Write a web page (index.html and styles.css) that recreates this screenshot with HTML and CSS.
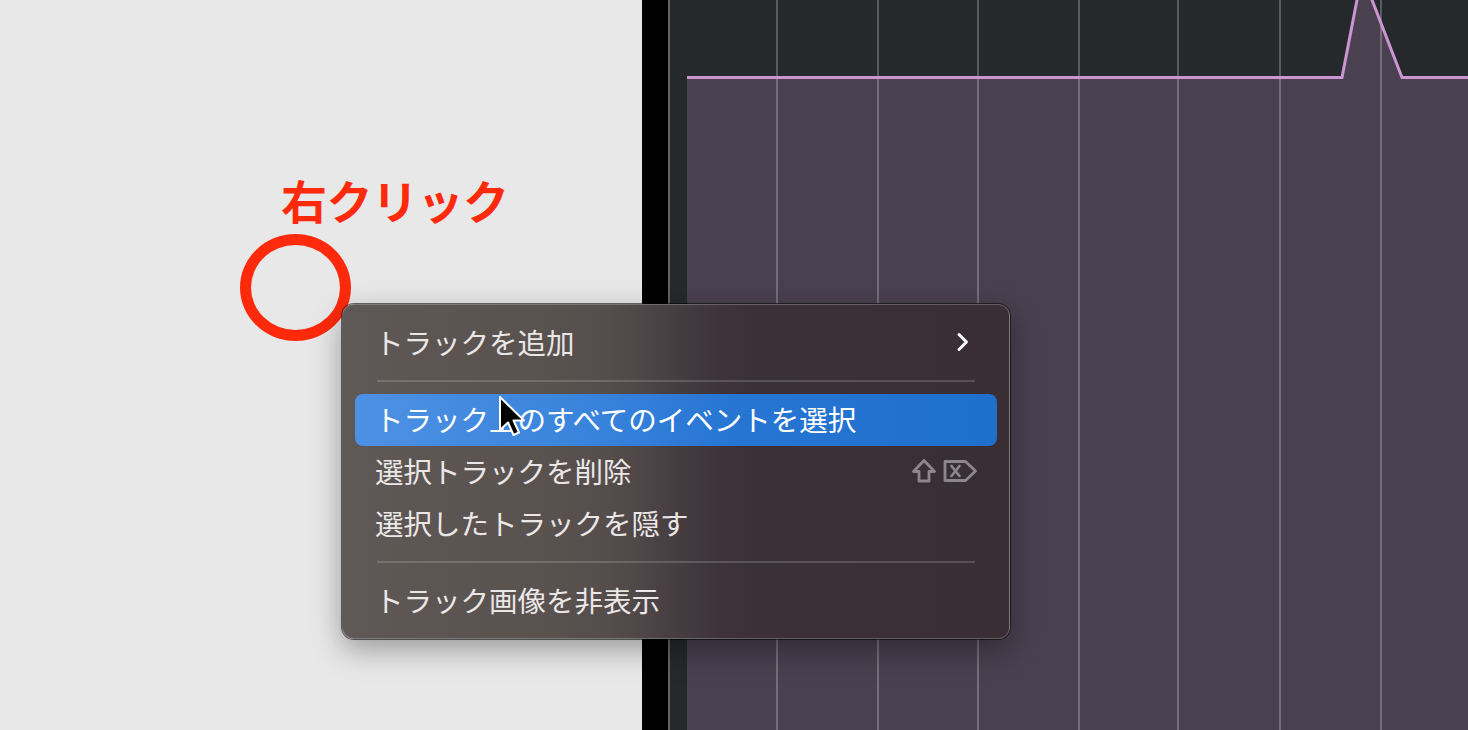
FILE: index.html
```html
<!DOCTYPE html>
<html lang="ja">
<head>
<meta charset="utf-8">
<title>トラックメニュー</title>
<link rel="stylesheet" href="styles.css">
</head>
<body>
<div class="workspace">
  <div class="inspector"></div>
  <div class="divider"></div>
  <div class="arrange">
    <svg class="lane" width="800" height="730" viewBox="0 0 800 730" xmlns="http://www.w3.org/2000/svg">
      <rect x="0" y="0" width="800" height="730" fill="#25292c"/>
      <polygon points="19,77 674,77 694,-26 734,77 800,77 800,730 19,730" fill="#4a4050"/>
      <g stroke="rgba(255,255,255,0.24)" stroke-width="2">
        <line x1="1" y1="0" x2="1" y2="730" stroke="rgba(255,255,255,0.28)"/>
        <line x1="109" y1="0" x2="109" y2="730"/>
        <line x1="210" y1="0" x2="210" y2="730"/>
        <line x1="310" y1="0" x2="310" y2="730"/>
        <line x1="411" y1="0" x2="411" y2="730"/>
        <line x1="510" y1="0" x2="510" y2="730"/>
        <line x1="612" y1="0" x2="612" y2="730"/>
        <line x1="713" y1="0" x2="713" y2="730"/>
      </g>
      <polyline points="19,77.5 674,77.5 694,-26 734,77.5 800,77.5" fill="none" stroke="#cb95d1" stroke-width="3"/>
    </svg>
  </div>
</div>

<div class="callout">右クリック</div>
<div class="click-ring"></div>

<div class="context-menu">
  <div class="menu-item">
    <span class="label">トラックを追加</span>
    <svg class="chevron" width="14" height="20" viewBox="0 0 14 20"><path d="M3 2.5 L10.5 10 L3 17.5" fill="none" stroke="#ffffff" stroke-width="3" stroke-linecap="round" stroke-linejoin="round"/></svg>
  </div>
  <div class="menu-sep"></div>
  <div class="menu-item is-active">
    <span class="label">トラック上のすべてのイベントを選択</span>
  </div>
  <div class="menu-item">
    <span class="label">選択トラックを削除</span>
    <span class="shortcut">
      <svg width="26" height="26" viewBox="0 0 26 26"><path d="M13 2.5 L23.5 13.5 L18 13.5 L18 23 L8 23 L8 13.5 L2.5 13.5 Z" fill="none" stroke="#8e8689" stroke-width="2.8" stroke-linejoin="round"/></svg>
      <svg width="35" height="26" viewBox="0 0 35 26"><path d="M2 3.5 L22.5 3.5 L32.5 13 L22.5 22.5 L2 22.5 Z" fill="none" stroke="#8e8689" stroke-width="2.8" stroke-linejoin="round"/><path d="M8.5 8 L16.5 18 M16.5 8 L8.5 18" stroke="#8e8689" stroke-width="2.8" stroke-linecap="round"/></svg>
    </span>
  </div>
  <div class="menu-item">
    <span class="label">選択したトラックを隠す</span>
  </div>
  <div class="menu-sep"></div>
  <div class="menu-item">
    <span class="label">トラック画像を非表示</span>
  </div>
</div>

<svg class="pointer" width="30" height="44" viewBox="0 0 30 44" xmlns="http://www.w3.org/2000/svg">
  <path d="M2 2 L2 35 L10 27.5 L15.5 40 L21 37.5 L15.5 25.5 L26 25.5 Z" fill="#000000" stroke="#ffffff" stroke-width="2" stroke-linejoin="round"/>
</svg>
</body>
</html>
```

FILE: styles.css
```css
* {
  box-sizing: border-box;
}

html, body {
  margin: 0;
  padding: 0;
}

body {
  width: 1468px;
  height: 730px;
  overflow: hidden;
  position: relative;
  font-family: "Noto Sans CJK JP", "Noto Sans", sans-serif;
  background: #e8e8e8;
}

.workspace {
  display: flex;
  width: 1468px;
  height: 730px;
}

.inspector {
  width: 642px;
  flex: none;
  background: #e8e8e8;
}

.divider {
  width: 26px;
  flex: none;
  background: #000000;
}

.arrange {
  flex: 1;
  overflow: hidden;
  background: #25292c;
}

.lane {
  display: block;
}

/* annotation */
.callout {
  position: absolute;
  left: 281px;
  top: 176px;
  font-size: 46px;
  line-height: 46px;
  font-weight: 700;
  color: #ff2a0c;
  letter-spacing: -0.5px;
  white-space: nowrap;
}

.click-ring {
  position: absolute;
  left: 240px;
  top: 234px;
  width: 111px;
  height: 107px;
  border: 11px solid #ff2a0c;
  border-radius: 50%;
}

/* context menu */
.context-menu {
  position: absolute;
  left: 342px;
  top: 304px;
  width: 668px;
  padding: 12px 0 11px;
  display: flex;
  flex-direction: column;
  border-radius: 12px;
  border: 1px solid rgba(255, 255, 255, 0.22);
  background: linear-gradient(to right,
    #5e5856 0%,
    #59524f 30%,
    #554d4c 40%,
    #4a4245 47%,
    #3e343a 56%,
    #3b3037 62%,
    #3a2e35 100%);
  box-shadow: 0 0 0 1px rgba(0, 0, 0, 0.55), 0 10px 30px rgba(0, 0, 0, 0.35);
}

.menu-item {
  height: 52px;
  margin: 0 12px;
  padding: 0 22px 2px 20px;
  border-radius: 8px;
  display: flex;
  align-items: center;
  justify-content: space-between;
  color: #ebe7e7;
  font-size: 28.5px;
  line-height: 50px;
  white-space: nowrap;
}

.menu-item .label {
  display: block;
}

.menu-item.is-active {
  color: #ffffff;
  background: linear-gradient(to right, #4d91e3 0%, #3a84dc 35%, #2675d3 60%, #1f6fcd 100%);
}

.chevron {
  display: block;
  margin-right: 5px;
}

.shortcut {
  display: flex;
  align-items: center;
  gap: 6px;
  margin-right: -3px;
}

.shortcut svg {
  display: block;
}

.menu-sep {
  height: 2px;
  margin: 11px 34px 12px;
  background: rgba(255, 255, 255, 0.16);
}

.pointer {
  position: absolute;
  left: 498px;
  top: 395px;
}
```
